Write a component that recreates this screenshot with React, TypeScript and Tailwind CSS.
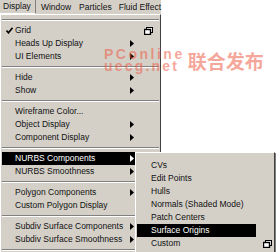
import React from 'react';

type Item =
  | { sep: true }
  | { label: string; arrow?: boolean; box?: boolean; check?: boolean; active?: boolean };

const mainItems: Item[] = [
  { label: 'Grid', check: true, box: true },
  { label: 'Heads Up Display', arrow: true },
  { label: 'UI Elements', arrow: true },
  { sep: true },
  { label: 'Hide', arrow: true },
  { label: 'Show', arrow: true },
  { sep: true },
  { label: 'Wireframe Color...' },
  { label: 'Object Display', arrow: true },
  { label: 'Component Display', arrow: true },
  { sep: true },
  { label: 'NURBS Components', arrow: true, active: true },
  { label: 'NURBS Smoothness', arrow: true },
  { sep: true },
  { label: 'Polygon Components', arrow: true },
  { label: 'Custom Polygon Display' },
  { sep: true },
  { label: 'Subdiv Surface Components', arrow: true },
  { label: 'Subdiv Surface Smoothness', arrow: true },
  { sep: true },
];

const subItems = [
  { label: 'CVs' },
  { label: 'Edit Points' },
  { label: 'Hulls' },
  { label: 'Normals (Shaded Mode)' },
  { label: 'Patch Centers' },
  { label: 'Surface Origins', active: true },
  { label: 'Custom', box: true },
];

function Arrow({ light }: { light?: boolean }) {
  return (
    <svg width="4" height="7" viewBox="0 0 4 7">
      <path d="M0 0 L4 3.5 L0 7 Z" fill={light ? '#fff' : '#000'} />
    </svg>
  );
}

function OptionBox() {
  return (
    <svg width="9" height="8" viewBox="0 0 9 8">
      <rect x="2.5" y="0.5" width="6" height="5" fill="#fff" stroke="#000" />
      <rect x="0.5" y="2.5" width="6" height="5" fill="#fff" stroke="#000" strokeWidth="1.4" />
    </svg>
  );
}

function Check() {
  return (
    <svg width="7" height="7" viewBox="0 0 7 7">
      <path d="M0.5 3.5 L2.5 5.8 L6.5 0.8" fill="none" stroke="#000" strokeWidth="1.6" />
    </svg>
  );
}

function Separator() {
  return (
    <div className="flex h-[8px] flex-col justify-center px-[1px]">
      <div className="h-[1px] bg-[#808080]" />
      <div className="h-[1px] bg-white" />
    </div>
  );
}

export default function App() {
  return (
    <div className="relative h-[252px] w-[279px] overflow-hidden bg-white font-['Liberation_Sans',Arial,sans-serif] text-[8.5px] leading-none text-[#111]">
      {/* menu bar */}
      <div className="flex h-[14px] w-[161px] items-center bg-[#d4d0c8]">
        <span className="flex h-[14px] items-center border-r border-b border-r-[#808080] border-b-white pl-[3px] pr-[4px]">Display</span>
        <span className="ml-[5px]">Window</span>
        <span className="ml-[8px]">Particles</span>
        <span className="ml-[7px] whitespace-nowrap">Fluid Effect</span>
      </div>

      {/* display menu */}
      <div className="h-[238px] w-[161px] border-l border-r border-t border-l-white border-r-[#404040] border-t-white bg-[#d4d0c8]">
        <div className="flex h-[9px] flex-col justify-center px-[1px]">
          <div className="h-[1px] bg-[#808080]" />
          <div className="h-[1px] bg-white" />
        </div>
        {mainItems.map((it, i) =>
          'sep' in it ? (
            <Separator key={i} />
          ) : (
            <div
              key={i}
              className={`mx-[1px] flex h-[13px] items-center ${it.active ? 'bg-black text-white' : ''}`}
            >
              <span className="flex w-[13px] justify-center pl-[2px]">{it.check && <Check />}</span>
              <span className="flex-1 whitespace-nowrap">{it.label}</span>
              <span className="flex w-[16px] pl-[2px]">{it.arrow && <Arrow light={it.active} />}</span>
              <span className="flex w-[15px] justify-start">{it.box && <OptionBox />}</span>
            </div>
          )
        )}
      </div>

      {/* NURBS Components submenu */}
      <div className="absolute left-[135px] top-[152px] h-[110px] w-[140px] border border-l-white border-t-white border-r-[#404040] border-b-[#404040] bg-[#d4d0c8] pt-[6px] shadow-[1px_1px_0_#808080]">
        {subItems.map((it, i) => (
          <div key={i} className="flex h-[13px] items-center">
            <div
              className={`ml-[1px] flex h-[13px] w-[119px] items-center pl-[14px] whitespace-nowrap ${it.active ? 'bg-black text-white' : ''}`}
            >
              {it.label}
            </div>
            <div className="flex flex-1 justify-end pr-[2px]">{it.box && <OptionBox />}</div>
          </div>
        ))}
      </div>

      {/* watermark */}
      <div className="pointer-events-none absolute left-[104px] top-[48px] flex items-center gap-[3px] text-[#ee5a44]/55">
        <div className="flex flex-col font-['Liberation_Sans',Arial,sans-serif] text-[14px] font-bold leading-[12px]">
          <span className="tracking-[2.5px]">PConline</span>
          <span className="tracking-[2.2px]">uecg.net</span>
        </div>
        <span className="font-['Noto_Sans_CJK_SC',sans-serif] text-[19px] font-bold leading-none">联合发布</span>
      </div>
    </div>
  );
}
